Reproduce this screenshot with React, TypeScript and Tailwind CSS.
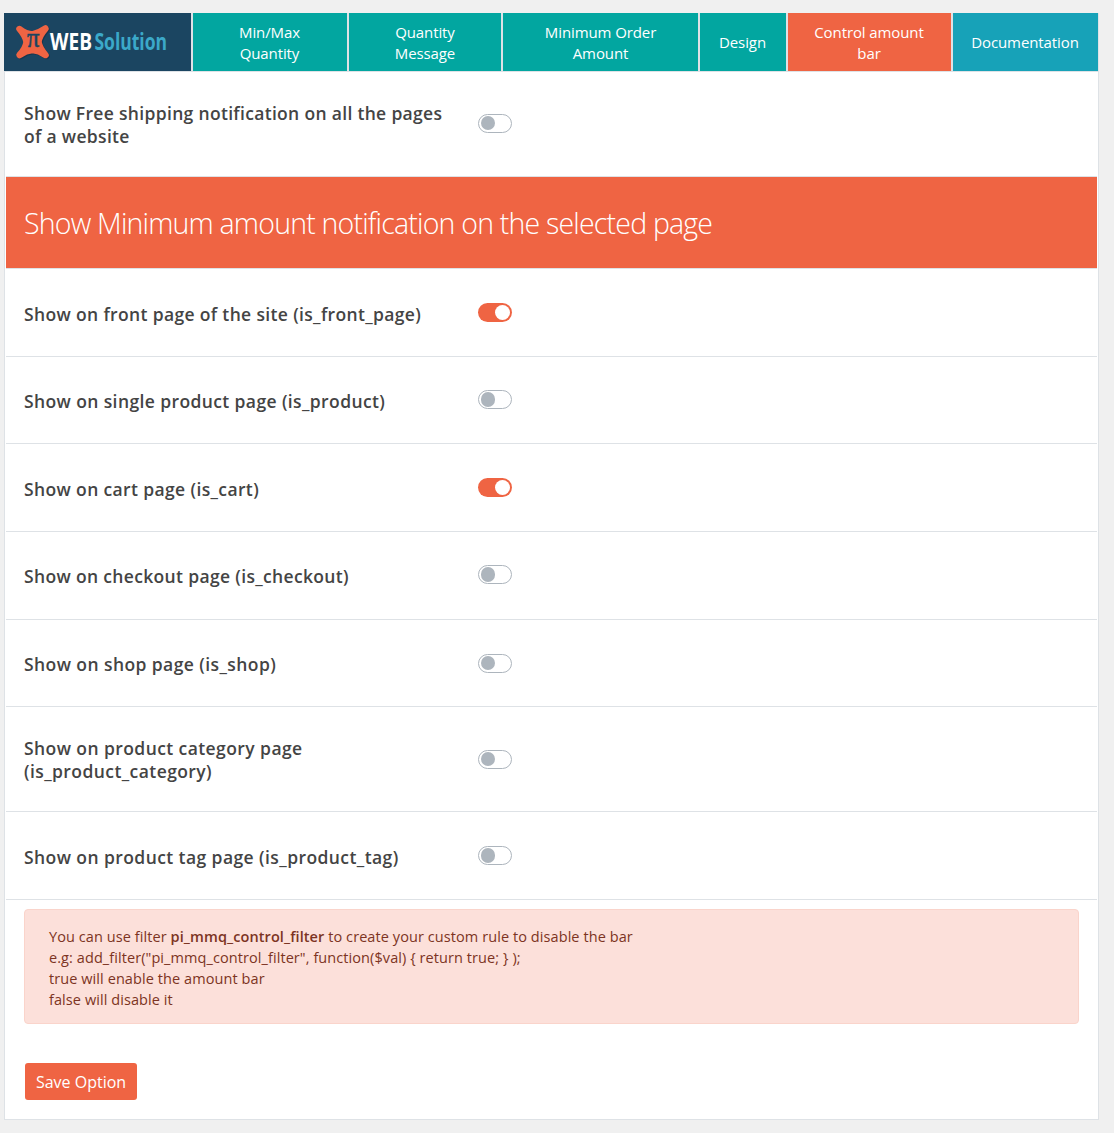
import React from "react";

type Tab = { lines: string[]; className: string };

const tabs: Tab[] = [
  { lines: ["Min/Max", "Quantity"], className: "w-[156px] bg-[#02a6a0] pt-px pr-px" },
  { lines: ["Quantity", "Message"], className: "w-[154px] bg-[#02a6a0] pt-px" },
  { lines: ["Minimum Order", "Amount"], className: "w-[197px] bg-[#02a6a0] pt-px" },
  { lines: ["Design"], className: "w-[88px] bg-[#02a6a0] pr-px" },
  { lines: ["Control amount", "bar"], className: "w-[165px] bg-[#ef6443] pt-px pr-px" },
  { lines: ["Documentation"], className: "w-[147px] bg-[#17a2b8] pr-px" },
];

type Row = { lines: string[]; on: boolean; className: string; labelClass: string };

const rows: Row[] = [
  { lines: ["Show on front page of the site (is_front_page)"], on: true, className: "h-[88px]", labelClass: "pt-1 tracking-[0.35px]" },
  { lines: ["Show on single product page (is_product)"], on: false, className: "h-[87px] pb-px", labelClass: "pt-1 tracking-[0.39px]" },
  { lines: ["Show on cart page (is_cart)"], on: true, className: "h-[88px]", labelClass: "pt-1 tracking-[0.37px]" },
  { lines: ["Show on checkout page (is_checkout)"], on: false, className: "h-[88px] pb-0.5", labelClass: "pt-1 tracking-[0.34px]" },
  { lines: ["Show on shop page (is_shop)"], on: false, className: "h-[87px]", labelClass: "pt-0.5 tracking-[0.42px]" },
  { lines: ["Show on product category page", "(is_product_category)"], on: false, className: "h-[105px]", labelClass: "pt-0.5 tracking-[0.42px]" },
  { lines: ["Show on product tag page (is_product_tag)"], on: false, className: "h-[88px]", labelClass: "pt-1 tracking-[0.42px]" },
];

const markPath =
  "M19.500 29 Q26 34 32.500 34.500 Q39 33 45.500 28.500 Q39 36 38.500 42 Q39.500 48 45.500 55 Q39 50.500 32.500 50 Q26 50.500 19.500 55 Q26 48 26.500 42 Q25.500 36 19.500 29Z";

function Logo() {
  return (
    <svg width="187" height="58" viewBox="4 13 187 58" role="img" aria-label="PI WEB Solution">
      <path d={markPath} fill="#16364f" stroke="#16364f" strokeWidth="6.500" strokeLinejoin="round" transform="translate(1 1)" />
      <path d={markPath} fill="#ef6443" stroke="#ef6443" strokeWidth="6.500" strokeLinejoin="round" />
      <text x="27" y="47" fontSize="28" fontWeight="400" fontFamily="Liberation Serif, serif" fill="#1b4561" stroke="#1b4561" strokeWidth="0.500" textLength="12.500" lengthAdjust="spacingAndGlyphs">π</text>
      <g transform="translate(50 50) scale(0.83 1)" fontSize="23" fontWeight="700" fontFamily="Open Sans, sans-serif">
        <text fill="#fff">WEB</text>
        <text x="53.500" fill="#3ba9c9" textLength="87.500" lengthAdjust="spacingAndGlyphs">Solution</text>
      </g>
    </svg>
  );
}

function Toggle({ on }: { on: boolean }) {
  return on ? (
    <span className="flex h-[19px] w-[34px] items-center justify-end rounded-full bg-[#ef6443] pr-[2.5px]">
      <span className="size-[14.5px] rounded-full bg-white" />
    </span>
  ) : (
    <span className="flex h-[19px] w-[34px] items-center rounded-full border border-[#adb5bd] bg-white pl-[1.5px]">
      <span className="size-[14.5px] rounded-full bg-[#adb5bd]" />
    </span>
  );
}

function SettingRow({ lines, on, className, labelClass }: Row) {
  return (
    <div className={`flex shrink-0 items-center border-b border-[#dee2e6] pl-[18px] ${className}`}>
      <div className={`w-[454px] text-[17.5px] leading-[23px] font-semibold whitespace-nowrap text-[#444] ${labelClass}`}>
        {lines.map((line) => (
          <div key={line}>{line}</div>
        ))}
      </div>
      <Toggle on={on} />
    </div>
  );
}

export default function App() {
  return (
    <div className="h-[1133px] w-[1114px] bg-[#f0f0f0] pt-[13px] pl-1 font-['Open_Sans',sans-serif]">
      <div className="flex h-[1107px] w-[1095px] flex-col border-x border-b border-[#dee2e6] bg-white">
        <nav className="-mx-px flex h-[59px] shrink-0 border-b border-[#dee2e6]">
          <div className="w-[187px] bg-[#1b4561]">
            <Logo />
          </div>
          {tabs.map((tab) => (
            <a
              key={tab.lines[0]}
              className={`flex flex-col items-center justify-center border-l-2 border-[#dee2e6] text-[15px] leading-[21px] tracking-[-0.1px] text-white ${tab.className}`}
            >
              {tab.lines.map((line) => (
                <span key={line}>{line}</span>
              ))}
            </a>
          ))}
        </nav>
        <main className="flex flex-col px-px">
          <SettingRow
            lines={["Show Free shipping notification on all the pages", "of a website"]}
            on={false}
            className="h-[105px] pb-0.5"
            labelClass="pt-1 tracking-[0.32px]"
          />
          <h2 className="flex h-[92px] items-center border-b border-[#dee2e6] bg-[#ef6443] pt-0.5 pl-[18px] text-[28.5px] font-light tracking-[-0.8px] text-white">
            Show Minimum amount notification on the selected page
          </h2>
          {rows.map((row) => (
            <SettingRow key={row.lines[0]} {...row} />
          ))}
          <div className="mx-[18px] mt-[9px] h-[115px] rounded border border-[#fad4cb] bg-[#fce0da] px-6 pt-4 text-[14.5px] leading-[21px] tracking-[0.08px] text-[#7c3423]">
            <p>
              You can use filter <strong className="font-semibold">pi_mmq_control_filter</strong> to create your custom rule to disable the bar
            </p>
            <p>e.g: add_filter("pi_mmq_control_filter", function($val) &#123; return true; &#125; );</p>
            <p>true will enable the amount bar</p>
            <p>false will disable it</p>
          </div>
          <button className="mt-[39px] ml-[19px] h-[37px] w-[112px] rounded-[3px] bg-[#ef6443] text-[16px] text-white">
            Save Option
          </button>
        </main>
      </div>
    </div>
  );
}
